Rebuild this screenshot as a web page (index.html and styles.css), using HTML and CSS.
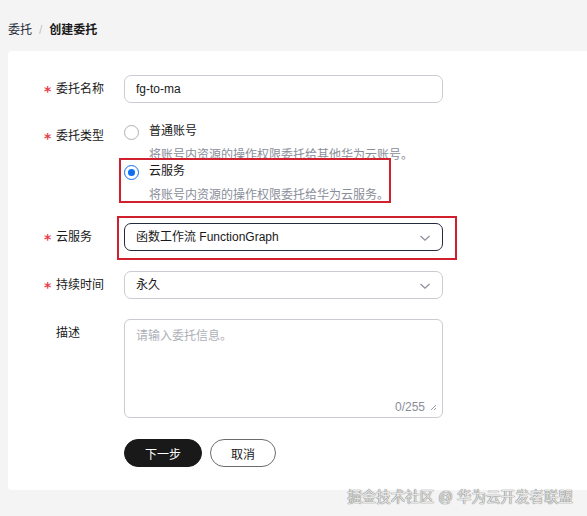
FILE: index.html
```html
<!DOCTYPE html>
<html lang="zh">
<head>
<meta charset="utf-8">
<link rel="stylesheet" href="styles.css">
</head>
<body>
<div class="page">
  <div class="crumbs"><span class="crumb">委托</span><span class="sep">/</span><span class="crumb current">创建委托</span></div>
  <div class="card">
    <div class="row">
      <div class="label"><span class="star">*</span>委托名称</div>
      <div class="control"><div class="input">fg-to-ma</div></div>
    </div>
    <div class="row row-radio">
      <div class="label"><span class="star">*</span>委托类型</div>
      <div class="control radios">
        <div class="option">
          <div class="opt-title"><span class="radio"></span>普通账号</div>
          <div class="opt-desc">将账号内资源的操作权限委托给其他华为云账号。</div>
        </div>
        <div class="option mark-wrap">
          <div class="opt-title"><span class="radio checked"></span>云服务</div>
          <div class="opt-desc">将账号内资源的操作权限委托给华为云服务。</div>
          <div class="mark mark-radio"></div>
        </div>
      </div>
    </div>
    <div class="row">
      <div class="label"><span class="star">*</span>云服务</div>
      <div class="control mark-wrap">
        <div class="input select focus">函数工作流 FunctionGraph<svg class="chev" viewBox="0 0 12 8"><path d="M1.5 2 L6 6.2 L10.5 2" fill="none" stroke="#8a8e99" stroke-width="1.2"/></svg></div>
        <div class="mark mark-select"></div>
      </div>
    </div>
    <div class="row">
      <div class="label"><span class="star">*</span>持续时间</div>
      <div class="control"><div class="input select">永久<svg class="chev" viewBox="0 0 12 8"><path d="M1.5 2 L6 6.2 L10.5 2" fill="none" stroke="#8a8e99" stroke-width="1.2"/></svg></div></div>
    </div>
    <div class="row">
      <div class="label plain">描述</div>
      <div class="control">
        <div class="textarea">
          <span class="placeholder">请输入委托信息。</span>
          <span class="count">0/255<svg class="grip" viewBox="0 0 8 8"><path d="M7 2 L2 7 M7 5 L5 7" stroke="#8a8e99" stroke-width="0.9" fill="none"/></svg></span>
        </div>
      </div>
    </div>
    <div class="row actions">
      <div class="label plain"></div>
      <div class="control btns">
        <button class="btn primary">下一步</button>
        <button class="btn ghost">取消</button>
      </div>
    </div>
  </div>
  <div class="watermark">掘金技术社区 @ 华为云开发者联盟</div>
</div>
</body>
</html>
```

FILE: styles.css
```css
* { box-sizing: border-box; }
html, body { margin: 0; padding: 0; }
body {
  background: #f4f4f4;
  font-family: "Liberation Sans", "Noto Sans CJK SC", sans-serif;
  font-size: 12px;
  color: #191919;
  width: 587px;
  height: 516px;
  overflow: hidden;
}
.page { position: relative; padding: 20px 0 0 8px; height: 516px; }
.crumbs { height: 20px; line-height: 20px; display: flex; align-items: center; }
.crumb { color: #252b3a; }
.crumb.current { font-weight: bold; color: #191919; }
.sep { color: #c2c4c9; margin: 0 7px; }
.card {
  margin-top: 11px;
  background: #fff;
  border-radius: 4px 0 0 4px;
  padding: 24px 0 24px 36px;
  height: 439px;
}
.row { display: flex; margin-bottom: 20px; }
.row-radio { margin-bottom: 20px; }
.label {
  width: 80px;
  flex: none;
  line-height: 28px;
  height: 28px;
  color: #191919;
  display: flex;
  align-items: center;
}
.label.plain { padding-left: 12px; }
.row-radio .label { margin-top: -1px; }
.star {
  color: #e5404b;
  width: 12px;
  font-family: "DejaVu Sans", sans-serif;
  font-size: 14px;
  font-weight: bold;
  line-height: 1;
  padding-top: 3px;
  display: inline-block;
}
.control { width: 319px; flex: none; }
.mark-wrap { position: relative; }
.input {
  height: 28px;
  border: 1px solid #c9ccd2;
  border-radius: 7px;
  padding: 0 11px;
  line-height: 26px;
  color: #191919;
  position: relative;
}
.select.focus { border-color: #252b3a; }
.chev { position: absolute; right: 11px; top: 10px; width: 12px; height: 8px; }
.option { position: relative; }
.opt-title { display: flex; align-items: center; line-height: 16px; height: 16px; }
.radio {
  width: 15px; height: 15px;
  border: 1px solid #adb0b8;
  border-radius: 50%;
  margin-right: 10px;
  margin-top: 3px;
  flex: none;
  position: relative;
}
.radio.checked { border-color: #0d6ef0; border-width: 1.5px; }
.radio.checked::after {
  content: "";
  position: absolute;
  left: 2.5px; top: 2.5px;
  width: 7px; height: 7px;
  border-radius: 50%;
  background: #0d6ef0;
}
.opt-desc { color: #8a8e99; line-height: 16px; margin-top: 8px; padding-left: 25px; }
.mark { position: absolute; border: 2px solid #d0202e; pointer-events: none; }
.mark-radio { left: -5px; top: -5px; width: 272px; height: 45px; }
.mark-select { left: -7px; top: -7px; width: 340px; height: 44px; }
.textarea {
  height: 99px;
  border: 1px solid #c9ccd2;
  border-radius: 6px;
  position: relative;
  padding: 6px 11px;
}
.placeholder { color: #adb0b8; }
.count {
  position: absolute; right: 5px; bottom: 3px;
  color: #8a8e99; font-size: 12px;
  display: flex; align-items: center;
}
.grip { width: 8px; height: 8px; margin-left: 4px; }
.actions { margin-top: 21px; margin-bottom: 0; }
.btns { display: flex; gap: 8px; }
.btn {
  height: 28px;
  border-radius: 14px;
  font-family: inherit;
  font-size: 12px;
  padding: 0;
  cursor: pointer;
}
.primary { width: 78px; background: #191919; color: #fff; border: 1px solid #191919; }
.ghost { width: 66px; background: #fff; color: #191919; border: 1px solid #6c6c6c; }
.watermark {
  position: absolute;
  right: 14px;
  top: 485px;
  font-size: 14.5px;
  color: #e6e6e6;
  text-shadow: 0 0 1px #666, 0 0 1px #777;
}
```
